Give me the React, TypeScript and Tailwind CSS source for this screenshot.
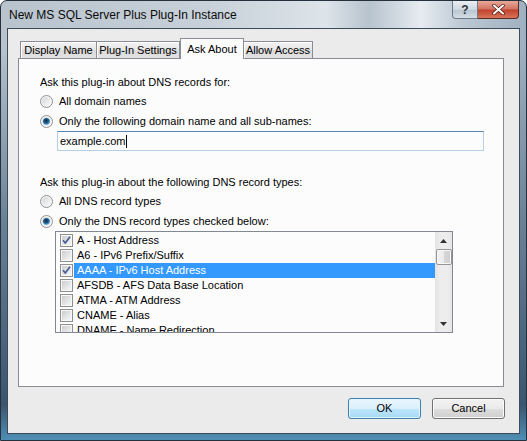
import React from "react";

const records: { label: string; checked: boolean; selected?: boolean }[] = [
  { label: "A - Host Address", checked: true },
  { label: "A6 - IPv6 Prefix/Suffix", checked: false },
  { label: "AAAA - IPv6 Host Address", checked: true, selected: true },
  { label: "AFSDB - AFS Data Base Location", checked: false },
  { label: "ATMA - ATM Address", checked: false },
  { label: "CNAME - Alias", checked: false },
  { label: "DNAME - Name Redirection", checked: false },
];

const Radio = ({ checked }: { checked?: boolean }) => (
  <svg width="13" height="13" viewBox="0 0 13 13" className="shrink-0">
    <defs>
      <linearGradient id="rbg" x1="0" y1="0" x2="1" y2="1">
        <stop offset="0" stopColor="#d4d6d8" />
        <stop offset="1" stopColor="#fbfbfb" />
      </linearGradient>
      <radialGradient id="rdot" cx="0.45" cy="0.4" r="0.6">
        <stop offset="0" stopColor="#0e2a45" />
        <stop offset="0.55" stopColor="#1f5c8e" />
        <stop offset="1" stopColor="#8fc6ea" />
      </radialGradient>
    </defs>
    <circle cx="6.5" cy="6.5" r="6" fill="#f7f7f7" stroke="#8e9092" />
    <circle cx="6.5" cy="6.5" r="4.5" fill="url(#rbg)" />
    {checked && <circle cx="6.5" cy="6.5" r="3.6" fill="url(#rdot)" />}
  </svg>
);

const Check = ({ checked }: { checked?: boolean }) => (
  <svg width="13" height="13" viewBox="0 0 13 13" className="shrink-0">
    <defs>
      <linearGradient id="cbg" x1="0" y1="0" x2="1" y2="1">
        <stop offset="0" stopColor="#cbcdd0" />
        <stop offset="1" stopColor="#f7f7f7" />
      </linearGradient>
    </defs>
    <rect x="0.5" y="0.5" width="12" height="12" fill="#f8f8f8" stroke="#8e8f8f" />
    <rect x="2" y="2" width="9" height="9" fill="url(#cbg)" />
    {checked && (
      <path
        d="M3 6.2 L5.3 9 L10 2.8"
        fill="none"
        stroke="#4a5c93"
        strokeWidth="1.7"
        strokeLinejoin="round"
      />
    )}
  </svg>
);

const RadioRow = ({ label, checked }: { label: string; checked?: boolean }) => (
  <div className="flex h-[20px] items-center gap-[6px] pl-[21px]">
    <Radio checked={checked} />
    <span>{label}</span>
  </div>
);

const App = () => {
  return (
    <div className="h-[441px] w-[527px] overflow-hidden rounded-t-[7px] border border-[#25313d] bg-[linear-gradient(180deg,rgba(0,0,0,0)_0%,rgba(0,0,0,0)_10%,#6a8298_50%,#3a556f_92%,#4f8fb5_100%),linear-gradient(90deg,#b8c3cd_0%,#c8d1d9_40%,#dde4ea_62%,#b7c3ce_70%,#e6ecf1_80%,#bcc8d3_88%,#9fb0c0_100%)] font-['Liberation_Sans',Arial,sans-serif] text-[11px] text-black">
      {/* title bar */}
      <div className="flex h-[27px] items-start justify-between pl-[8px] pr-[7px]">
        <div className="pt-[5px] text-[12px] text-[#0a0a0a]">
          New MS SQL Server Plus Plug-In Instance
        </div>
        <div className="flex">
          <div className="flex h-[18px] w-[26px] items-center justify-center rounded-bl-[4px] border border-t-0 border-[#6b7b8a] bg-[linear-gradient(180deg,#e9eef2_0%,#cfd8e0_50%,#b7c4cf_51%,#d6dee5_100%)] text-[12px] font-bold text-[#2a3440]">
            ?
          </div>
          <div className="flex h-[18px] w-[41px] items-center justify-center rounded-br-[4px] border border-l-0 border-t-0 border-[#5a2a24] bg-[linear-gradient(180deg,#e8a898_0%,#d27462_48%,#c2402c_52%,#d8765a_100%)]">
            <svg width="13" height="11" viewBox="0 0 13 11">
              <path d="M2 1.5 L11 9.5 M11 1.5 L2 9.5" stroke="#4a1a14" strokeWidth="3.4" strokeLinecap="round" />
              <path d="M2 1.5 L11 9.5 M11 1.5 L2 9.5" stroke="#ffffff" strokeWidth="2" strokeLinecap="round" />
            </svg>
          </div>
        </div>
      </div>

      {/* client area */}
      <div className="mx-[6px] flex h-[406px] flex-col border border-[#3d4a57] bg-[#ebebeb]">
        <div className="flex h-[29px] items-end pl-[12px]">
          <div className="flex h-[17px] w-[77px] items-center justify-center border border-b-0 border-[#898c95] bg-[linear-gradient(180deg,#f3f3f3_0%,#e6e6e6_50%,#d9d9d9_51%,#e2e2e2_100%)] shadow-[inset_1px_1px_0_#ffffff]">
            Display Name
          </div>
          <div className="flex h-[17px] w-[83px] items-center justify-center border border-b-0 border-l-0 border-[#898c95] bg-[linear-gradient(180deg,#f3f3f3_0%,#e6e6e6_50%,#d9d9d9_51%,#e2e2e2_100%)] shadow-[inset_1px_1px_0_#ffffff]">
            Plug-In Settings
          </div>
          <div className="relative z-10 -mb-px flex h-[21px] w-[64px] items-start justify-center border border-b-0 border-[#898c95] bg-[#fcfcfc] pt-[2px]">
            Ask About
          </div>
          <div className="flex h-[17px] w-[69px] items-center justify-center border border-b-0 border-l-0 border-[#898c95] bg-[linear-gradient(180deg,#f3f3f3_0%,#e6e6e6_50%,#d9d9d9_51%,#e2e2e2_100%)] shadow-[inset_1px_1px_0_#ffffff]">
            Allow Access
          </div>
        </div>

        <div className="ml-[10px] flex h-[329px] w-[486px] flex-col border border-[#898c95] bg-[#fcfcfc] pt-[14px]">
          <div className="flex h-[18px] items-center pl-[21px]">
            Ask this plug-in about DNS records for:
          </div>
          <RadioRow label="All domain names" />
          <RadioRow label="Only the following domain name and all sub-names:" checked />
          <div className="ml-[38px] flex h-[20px] w-[427px] items-center border border-[#b5cfe7] border-t-[#5a86b0] bg-[#fcfcfc] pl-[2px]">
            example.com
            <span className="ml-px inline-block h-[13px] w-px bg-black" />
          </div>
          <div className="mt-[22px] flex h-[18px] items-center pl-[21px]">
            Ask this plug-in about the following DNS record types:
          </div>
          <RadioRow label="All DNS record types" />
          <RadioRow label="Only the DNS record types checked below:" checked />
          <div className="ml-[36px] flex h-[102px] w-[398px] border border-[#828790] bg-[#fcfcfc]">
            <div className="flex flex-1 flex-col overflow-hidden pt-px">
              {records.map((r) => (
                <div key={r.label} className="flex h-[15px] shrink-0 items-center">
                  <div className="flex w-[18px] justify-center pl-[3px]">
                    <Check checked={r.checked} />
                  </div>
                  <div
                    className={
                      r.selected
                        ? "flex h-[15px] flex-1 items-center bg-[#3399ff] pl-[3px] text-white"
                        : "flex h-[15px] flex-1 items-center pl-[3px]"
                    }
                  >
                    {r.label}
                  </div>
                </div>
              ))}
            </div>
            <div className="flex w-[17px] flex-col items-center bg-[linear-gradient(90deg,#e3e3e3_0%,#ededed_30%,#ededed_70%,#e5e5e5_100%)]">
              <div className="flex h-[17px] w-full items-center justify-center">
                <svg width="7" height="4" viewBox="0 0 7 4">
                  <path d="M0 4 L3.5 0 L7 4 Z" fill="#333" />
                </svg>
              </div>
              <div className="h-[16px] w-[16px] rounded-[2px] border border-[#959595] bg-[linear-gradient(90deg,#f2f2f2_0%,#ebebeb_50%,#d6d6d6_51%,#cfcfcf_100%)] shadow-[inset_0_0_0_1px_#f8f8f8]" />
              <div className="flex-1" />
              <div className="flex h-[17px] w-full items-center justify-center">
                <svg width="7" height="4" viewBox="0 0 7 4">
                  <path d="M0 0 L7 0 L3.5 4 Z" fill="#333" />
                </svg>
              </div>
            </div>
          </div>
        </div>

        <div className="flex justify-end gap-[11px] pr-[14px] pt-[11px]">
          <button className="h-[21px] w-[73px] rounded-[3px] border border-[#3c7fb1] bg-[linear-gradient(180deg,#eaf6fd_0%,#d9f0fc_50%,#bee6fd_51%,#a7d9f5_100%)] shadow-[inset_0_0_0_1px_#e4f4fc]">
            OK
          </button>
          <button className="h-[21px] w-[73px] rounded-[3px] border border-[#707070] bg-[linear-gradient(180deg,#f2f2f2_0%,#ebebeb_50%,#dddddd_51%,#cfcfcf_100%)] shadow-[inset_0_0_0_1px_#fbfbfb]">
            Cancel
          </button>
        </div>
      </div>
    </div>
  );
};

export default App;
